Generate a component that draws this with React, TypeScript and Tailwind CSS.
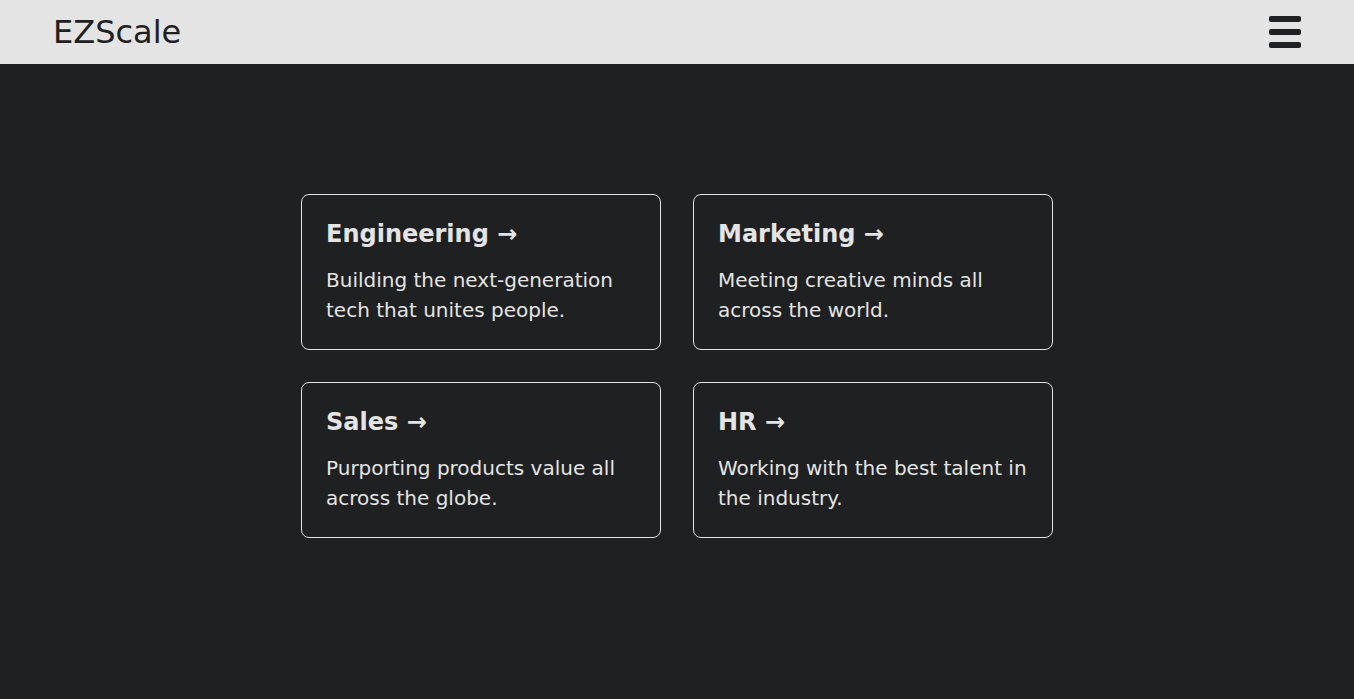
import React from "react";

const departments = [
  { title: "Engineering", text: "Building the next-generation tech that unites people." },
  { title: "Marketing", text: "Meeting creative minds all across the world." },
  { title: "Sales", text: "Purporting products value all across the globe." },
  { title: "HR", text: "Working with the best talent in the industry." },
];

const App: React.FC = () => {
  return (
    <div className="min-h-screen bg-[#1f2022] font-['DejaVu_Sans',sans-serif]">
      <header className="h-16 bg-[#e4e4e4] flex items-center justify-between pl-[53px] pr-[53px]">
        <span className="text-[32px] leading-none text-[#1f2022]">EZScale</span>
        <button className="flex flex-col gap-[7px] w-8" aria-label="Menu">
          <span className="block h-[6px] w-8 rounded-[2px] bg-[#1f2022]"></span>
          <span className="block h-[6px] w-8 rounded-[2px] bg-[#1f2022]"></span>
          <span className="block h-[6px] w-8 rounded-[2px] bg-[#1f2022]"></span>
        </button>
      </header>
      <main className="flex justify-center pt-[130px]">
        <div className="grid grid-cols-2 gap-8">
          {departments.map((d) => (
            <div
              key={d.title}
              className="w-[360px] border border-[#e4e4e4] rounded-lg p-6 text-[#e4e4e4]"
            >
              <h3 className="text-2xl leading-[30px] font-bold mb-4">{d.title} →</h3>
              <p className="text-[20px] leading-[30px]">{d.text}</p>
            </div>
          ))}
        </div>
      </main>
    </div>
  );
};

export default App;
